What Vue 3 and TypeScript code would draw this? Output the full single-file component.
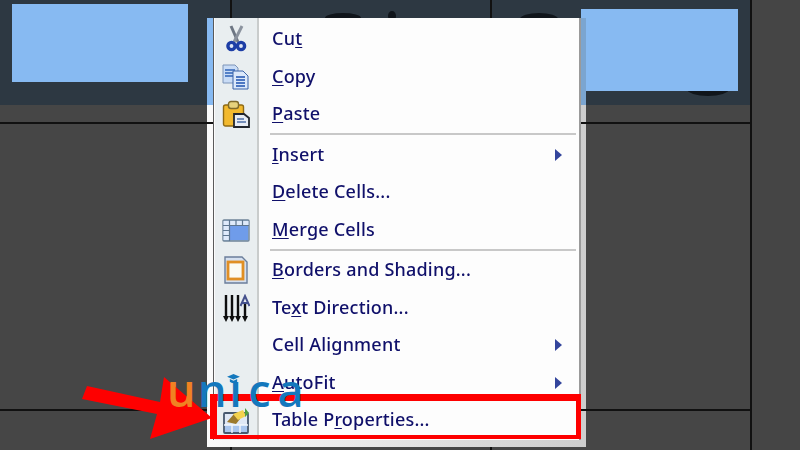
<script setup lang="ts">
interface MenuRow {
  id: string
  before?: string
  key?: string
  after?: string
  icon?: string
  sub?: boolean
  sep?: boolean
}

const cells = Array.from({ length: 9 }, (_, i) => i)

const rows: MenuRow[] = [
  { id: 'cut', before: 'Cu', key: 't', icon: 'cut' },
  { id: 'copy', key: 'C', after: 'opy', icon: 'copy' },
  { id: 'paste', key: 'P', after: 'aste', icon: 'paste' },
  { id: 's1', sep: true },
  { id: 'insert', key: 'I', after: 'nsert', sub: true },
  { id: 'delete', key: 'D', after: 'elete Cells...' },
  { id: 'merge', key: 'M', after: 'erge Cells', icon: 'merge' },
  { id: 's2', sep: true },
  { id: 'borders', key: 'B', after: 'orders and Shading...', icon: 'borders' },
  { id: 'direction', before: 'Te', key: 'x', after: 't Direction...', icon: 'direction' },
  { id: 'align', before: 'Cell Alignment', sub: true },
  { id: 'autofit', key: 'A', after: 'utoFit', sub: true },
  { id: 'props', before: 'Table P', key: 'r', after: 'operties...', icon: 'props' }
]
</script>

<template>
  <div class="page">
    <div class="table">
      <div v-for="c in cells" :key="c" class="cell">
        <div v-if="c < 3" class="band"></div>
      </div>
    </div>
    <div class="side"></div>

    <!-- blurred heading letters left visible around the covers -->
    <span class="blob blob-a"></span>
    <span class="blob blob-b"></span>
    <span class="blob blob-c"></span>
    <span class="blob blob-d"></span>

    <div class="cover cover-left"></div>
    <div class="cover cover-right"></div>

    <div class="menu-wrap">
      <div class="menu">
        <template v-for="row in rows" :key="row.id">
          <div v-if="row.sep" class="sep"></div>
          <div v-else class="item">
            <div class="icon">
              <svg v-if="row.icon === 'cut'" width="28" height="28" viewBox="0 0 28 28">
                <path d="M9 1l7 16" stroke="#6d7683" stroke-width="3" fill="none" />
                <path d="M20 1l-8 16" stroke="#8b939e" stroke-width="3" fill="none" />
                <circle cx="9.500" cy="21" r="3.600" fill="#dfe6f5" stroke="#1d3ea6" stroke-width="3.400" />
                <circle cx="19" cy="21" r="3.600" fill="#dfe6f5" stroke="#1d3ea6" stroke-width="3.400" />
              </svg>
              <svg v-else-if="row.icon === 'copy'" width="28" height="28" viewBox="0 0 28 28">
                <path d="M1 2h12l3 3v15H1z" fill="#c9dcf6" stroke="#7d94b8" />
                <path d="M3 7h10M3 10h10M3 13h10" stroke="#2f63b8" stroke-width="1.600" />
                <path d="M11 8h10l5 5v13H11z" fill="#dbe8fa" stroke="#3a63a8" />
                <path d="M14 14h9M14 17h9M14 20h9M14 23h9" stroke="#1f52b0" stroke-width="1.600" />
              </svg>
              <svg v-else-if="row.icon === 'paste'" width="28" height="28" viewBox="0 0 28 28">
                <rect x="1.500" y="5" width="20" height="21" rx="2" fill="#f2b92e" stroke="#8f6a14" stroke-width="1.400" />
                <rect x="6.500" y="1.500" width="10" height="7" rx="2.500" fill="#e6d27c" stroke="#7f6a2a" stroke-width="1.400" />
                <path d="M12 14h10l5 4v9H12z" fill="#e8edf5" stroke="#22262e" stroke-width="1.800" />
                <path d="M15 19h7M15 22h9" stroke="#4d6fa6" stroke-width="1.600" />
              </svg>
              <svg v-else-if="row.icon === 'merge'" width="28" height="28" viewBox="0 0 28 28">
                <rect x="1" y="4" width="26" height="21" rx="1" fill="#a9c8ef" stroke="#6f8498" stroke-width="1.400" />
                <path d="M1.500 5h25v4h-25zM1.500 9h6v15h-6z" fill="#dfeafa" />
                <path d="M8 9h18v15H8z" fill="#6f9cea" />
                <path d="M1 9.500h26M7.500 4v21M1 14.500h7M1 19.500h7M14 4v5M20.500 4v5" stroke="#5e7690" stroke-width="1.200" />
              </svg>
              <svg v-else-if="row.icon === 'borders'" width="28" height="28" viewBox="0 0 28 28">
                <path d="M3 1h17l5 5v21H3z" fill="#d5e0f0" stroke="#6b7e9a" stroke-width="1.400" />
                <rect x="6" y="6" width="15" height="17" fill="#fbfbf4" stroke="#e08f24" stroke-width="2.800" />
              </svg>
              <svg v-else-if="row.icon === 'direction'" width="28" height="28" viewBox="0 0 28 28">
                <path d="M4 1v22M10 1v22M16 1v22" stroke="#0e0e0e" stroke-width="2.400" />
                <path d="M23 10v13" stroke="#0e0e0e" stroke-width="2.400" />
                <path d="M1 22h6L4 28zM7 22h6L10 28zM13 22h6L16 28zM20 22h6L23 28z" fill="#0e0e0e" />
                <path d="M18.500 12L23 2l4.500 10M20 9h6" stroke="#44508c" stroke-width="2" fill="none" />
              </svg>
              <svg v-else-if="row.icon === 'props'" width="28" height="28" viewBox="0 0 28 28">
                <rect x="2" y="7" width="24" height="20" rx="1" fill="#dfe8f5" stroke="#46586e" stroke-width="1.800" />
                <path d="M3 19h22v7H3z" fill="#a8c6ee" />
                <path d="M2 19h24M10 19v8M18 19v8" stroke="#f4f7fb" stroke-width="1.400" />
                <path d="M5 16l7-8 6 5-4 5z" fill="#9c7a2c" />
                <path d="M11 8l10-4 3 6-8 4z" fill="#f3d24e" />
                <path d="M23 2l4 5-4 4z" fill="#4f9e3e" />
              </svg>
            </div>
            <span class="label">{{ row.before }}<u v-if="row.key">{{ row.key }}</u>{{ row.after }}</span>
            <span v-if="row.sub" class="caret"></span>
          </div>
        </template>
      </div>
    </div>

    <svg class="arrow" width="140" height="70" viewBox="0 0 140 70">
      <polygon points="7,16 80,32 84,7 132,48 70,69 77,44 2,29" fill="#fe0000" />
    </svg>
    <div class="redbox"></div>

    <!-- the cap stands in for the dot of the i -->
    <div class="logo">
      <span class="logo-u">u</span>nı<span class="logo-ca">ca</span>
      <svg class="cap" width="13" height="11" viewBox="0 0 14 12">
        <path d="M7 0l7 3-7 3-7-3z" fill="#1478bd" />
        <path d="M3 5.500v3c2 2 6 2 8 0v-3L7 7.300z" fill="#1478bd" />
      </svg>
    </div>
  </div>
</template>

<style scoped>
.page {
  position: relative;
  display: flex;
  width: 800px;
  height: 450px;
  overflow: hidden;
  background: #454545;
  font-family: "Noto Sans", "Open Sans", sans-serif;
}

.table {
  display: grid;
  grid-template-columns: 232px 260px 260px;
  grid-template-rows: 124px 287px 39px;
  flex: none;
}

.cell {
  border-right: 2px solid #111;
  border-bottom: 2px solid #111;
  background: #464646;
}

.cell:nth-child(n + 7) {
  border-bottom: 0;
}

.band {
  height: 105px;
  background: #2d3842;
}

.side {
  flex: 1;
  background: #454545;
}

.blob {
  position: absolute;
  background: #10151b;
}

.blob-a {
  left: 520px;
  top: 13px;
  width: 38px;
  height: 12px;
  border-radius: 50% 50% 0 0;
}

.blob-b {
  left: 325px;
  top: 13px;
  width: 36px;
  height: 10px;
  border-radius: 50% 50% 0 0;
}

.blob-c {
  left: 388px;
  top: 11px;
  width: 8px;
  height: 10px;
  border-radius: 50%;
}

.blob-d {
  left: 687px;
  top: 82px;
  width: 42px;
  height: 14px;
  border-radius: 0 0 50% 50%;
}

.cover {
  position: absolute;
  background: #87baf2;
}

.cover-left {
  left: 12px;
  top: 4px;
  width: 176px;
  height: 78px;
}

.cover-right {
  left: 581px;
  top: 9px;
  width: 157px;
  height: 82px;
}

.menu-wrap {
  position: absolute;
  left: 207px;
  top: 18px;
  width: 379px;
  height: 429px;
  box-sizing: border-box;
  padding-left: 6px;
  background:
    linear-gradient(#87baf2, #87baf2) 0 0 / 6px 87px no-repeat,
    linear-gradient(#7ba5d0, #7ba5d0) 100% 0 / 5px 87px no-repeat,
    linear-gradient(#111, #111) 0 104px / 6px 2px no-repeat,
    linear-gradient(#111, #111) 100% 104px / 5px 2px no-repeat,
    linear-gradient(#111, #111) 100% 391px / 5px 2px no-repeat,
    linear-gradient(to right, #fbfbfb, #cdcdcd);
}

.menu {
  box-sizing: border-box;
  width: 368px;
  height: 422px;
  padding-top: 2.5px;
  border-left: 1px solid #5a5a5a;
  border-right: 2px solid #9a9a9a;
  color: #10106a;
  font-size: 18px;
  filter: blur(0.4px);
  background: linear-gradient(
    to right,
    #fbfbfb 1px,
    #e9eef0 1px,
    #e9eef0 43px,
    #c9cccc 43px,
    #c9cccc 45px,
    #fdfdfd 45px
  );
}

.item {
  display: flex;
  align-items: center;
  height: 37.5px;
}

.icon {
  display: flex;
  justify-content: center;
  align-items: center;
  flex: none;
  width: 44px;
}

.label {
  margin-left: 14px;
  margin-top: -2px;
  font-weight: 500;
  letter-spacing: 0.2px;
  white-space: nowrap;
}

.label u {
  text-underline-offset: 2px;
}

.caret {
  margin-left: auto;
  margin-right: 17px;
  border-left: 7px solid #33459c;
  border-top: 6px solid transparent;
  border-bottom: 6px solid transparent;
}

.sep {
  height: 2px;
  margin: 0 3px 1px 56px;
  background: #c8c8c8;
}

.arrow {
  position: absolute;
  left: 80px;
  top: 370px;
}

.redbox {
  position: absolute;
  left: 210px;
  top: 394px;
  box-sizing: border-box;
  width: 371px;
  height: 45px;
  border: solid #fe0000;
  border-width: 7px 5px 4px 7px;
}

.logo {
  position: absolute;
  left: 167px;
  top: 360px;
  color: #1478bd;
  font-family: "Open Sans", sans-serif;
  font-size: 45px;
  font-weight: 600;
  line-height: 60px;
  letter-spacing: 2.5px;
}

.logo-u {
  color: #f08222;
}

.logo-ca {
  margin-left: 4px;
  letter-spacing: 7px;
}

.cap {
  position: absolute;
  left: 60px;
  top: 14px;
}
</style>
